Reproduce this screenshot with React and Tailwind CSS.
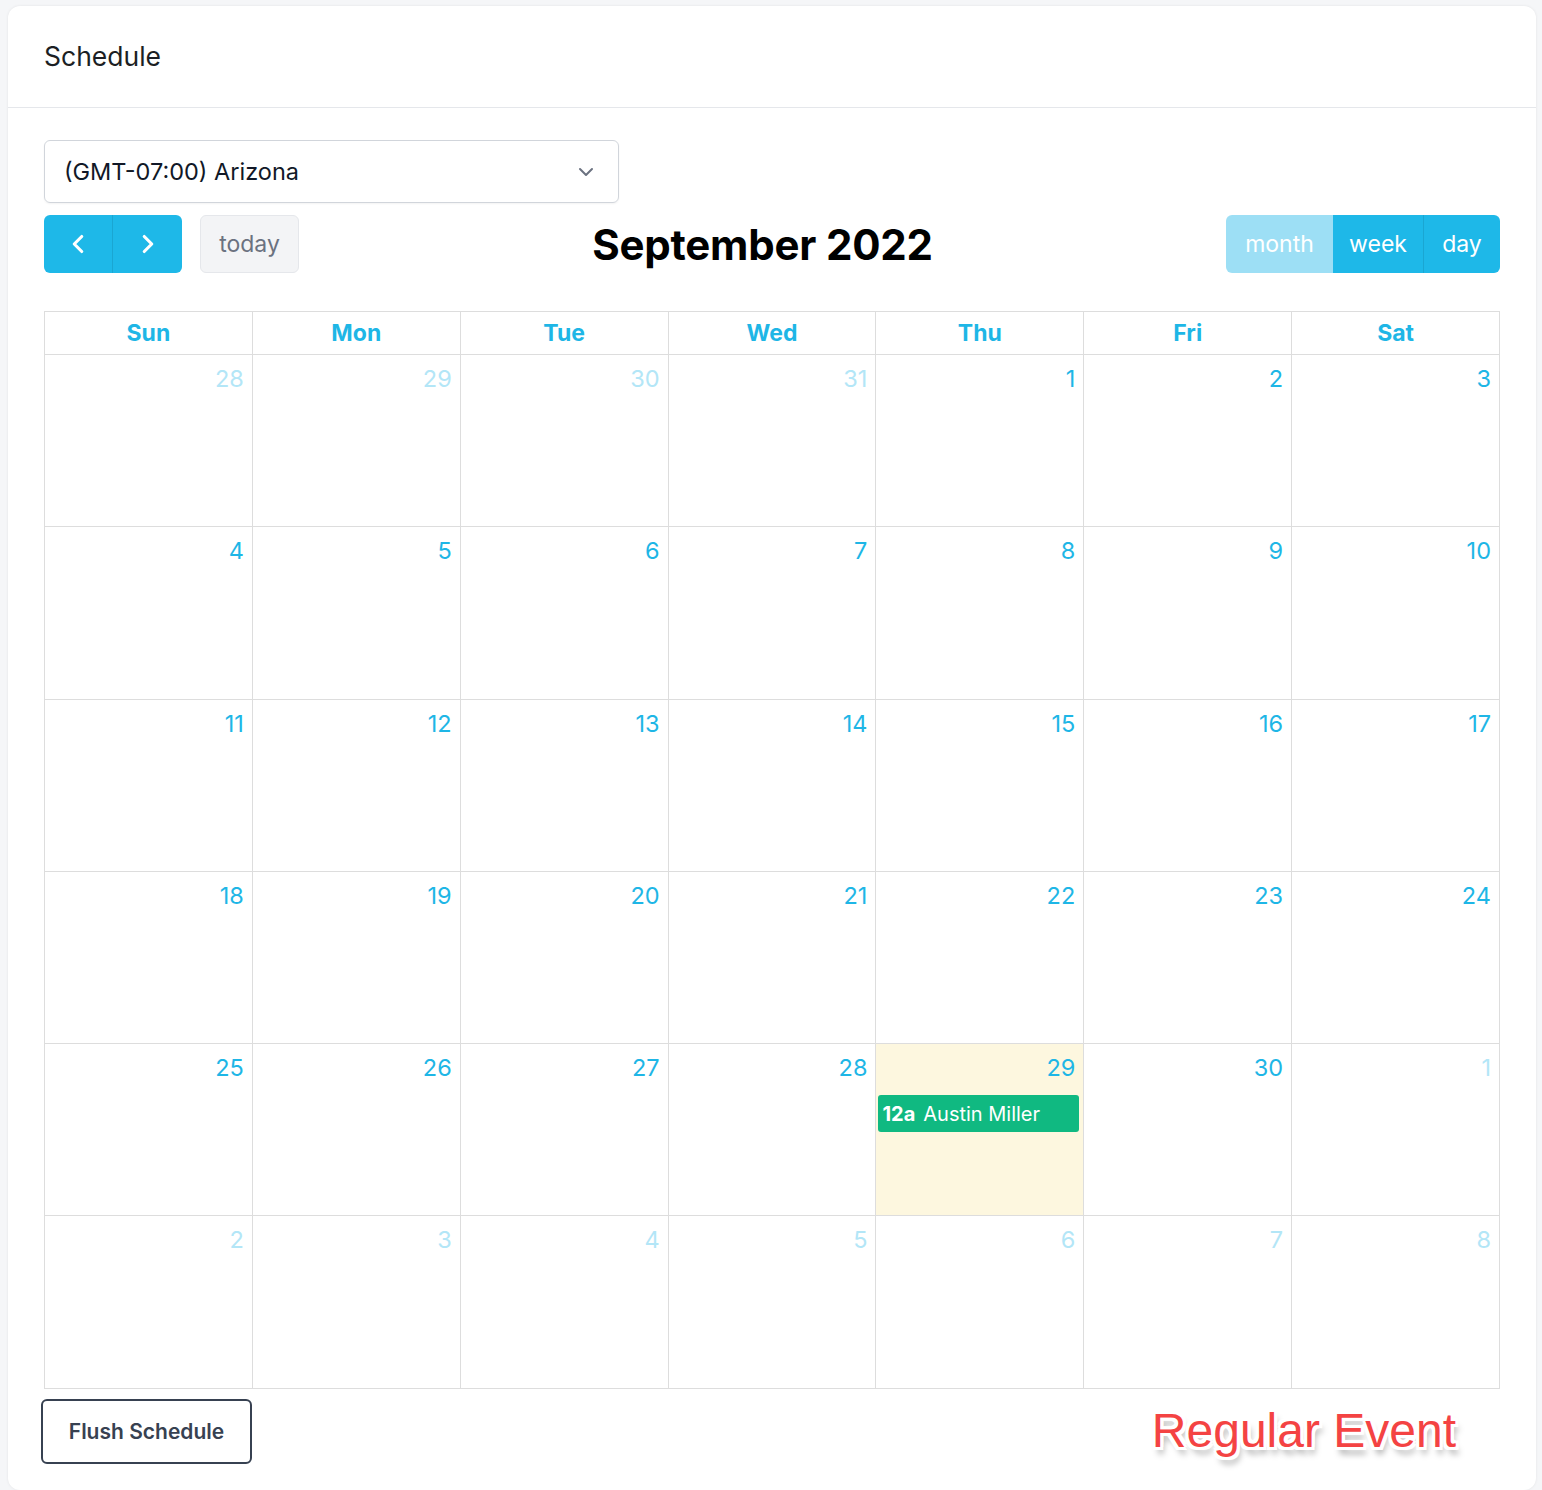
import React from "react";
import { ChevronDown, ChevronLeft, ChevronRight } from "lucide-react";

const days = ["Sun", "Mon", "Tue", "Wed", "Thu", "Fri", "Sat"];

// six weeks shown in month view, starting Sun Aug 28
const buildWeeks = () => {
  const weeks = [];
  const start = new Date(2022, 7, 28);
  for (let w = 0; w < 6; w++) {
    const row = [];
    for (let d = 0; d < 7; d++) {
      const date = new Date(start);
      date.setDate(start.getDate() + w * 7 + d);
      row.push({
        day: date.getDate(),
        inMonth: date.getMonth() === 8,
        today: date.getMonth() === 8 && date.getDate() === 29,
      });
    }
    weeks.push(row);
  }
  return weeks;
};

const App = () => {
  const weeks = buildWeeks();

  return (
    <div
      className="min-h-screen bg-[#f5f6f8] px-2 pt-[6px] pb-1"
      style={{ fontFamily: "Inter, 'Noto Sans', sans-serif" }}
    >
      <div className="bg-white rounded-xl shadow-[0_0_3px_rgba(0,0,0,0.08)] w-[1528px]">
        {/* Header */}
        <div className="h-[102px] flex items-center px-9 border-b border-[#e5e7eb]">
          <h1 className="text-[26.5px] text-[#1c1f24]">Schedule</h1>
        </div>

        {/* Body */}
        <div className="px-9 pt-8 pb-[23px]">
          {/* Timezone select */}
          <div className="w-[575px] h-[63px] border border-[#d1d5db] rounded-md flex items-center justify-between pl-[19px] pr-5 shadow-[0_1px_2px_rgba(0,0,0,0.05)]">
            <span className="text-[23.5px] text-[#111827]">(GMT-07:00) Arizona</span>
            <ChevronDown size={24} strokeWidth={2} className="text-[#6b7280]" />
          </div>

          {/* Toolbar */}
          <div className="mt-3 flex items-center justify-between h-[58px]">
            <div className="flex items-center gap-[18px]">
              <div className="flex h-[58px] rounded-md overflow-hidden">
                <button className="w-[69px] bg-[#1eb8e8] flex items-center justify-center text-white border-r border-[#1aa6d2]">
                  <ChevronLeft size={30} strokeWidth={2.5} />
                </button>
                <button className="w-[69px] bg-[#1eb8e8] flex items-center justify-center text-white">
                  <ChevronRight size={30} strokeWidth={2.5} />
                </button>
              </div>
              <button className="h-[58px] w-[99px] bg-[#f3f4f6] border border-[#e5e7eb] rounded-md text-[23px] text-[#6b7280]">
                today
              </button>
            </div>
            <h2 className="text-[42px] font-bold text-black tracking-[-0.2px]">September 2022</h2>
            <div className="flex h-[58px] rounded-md overflow-hidden">
              <button className="w-[107px] bg-[#9ddff5] text-white text-[23px]">month</button>
              <button className="w-[91px] bg-[#1eb8e8] text-white text-[23px] border-r border-[#1aa6d2]">week</button>
              <button className="w-[76px] bg-[#1eb8e8] text-white text-[23px]">day</button>
            </div>
          </div>

          {/* Calendar */}
          <div className="mt-[38px] border-l border-t border-[#dddddd] w-[1456px]">
            <div className="grid grid-cols-7">
              {days.map((d) => (
                <div
                  key={d}
                  className="h-[43px] border-r border-b border-[#dddddd] flex items-center justify-center text-[23px] font-bold text-[#1eb6e6]"
                >
                  {d}
                </div>
              ))}
            </div>
            {weeks.map((row, wi) => (
              <div key={wi} className="grid grid-cols-7">
                {row.map((c, ci) => (
                  <div
                    key={ci}
                    className={`h-[172.3px] border-r border-b border-[#dddddd] flex flex-col ${
                      c.today ? "bg-[#fdf7df]" : ""
                    }`}
                  >
                    <div
                      className={`text-right pr-2 pt-[9px] text-[23.5px] leading-[30px] ${
                        c.inMonth ? "text-[#1eb6e6]" : "text-[#b3e6f7]"
                      }`}
                    >
                      {c.day}
                    </div>
                    {c.today && (
                      <div className="ml-[2px] mr-[4px] mt-[12px] h-[37px] bg-[#10b981] rounded-[3px] flex items-center px-[4px] text-white text-[20px]">
                        <span className="font-bold mr-[8px]">12a</span>
                        <span>Austin Miller</span>
                      </div>
                    )}
                  </div>
                ))}
              </div>
            ))}
          </div>

          {/* Footer */}
          <div className="mt-[10px] flex items-start justify-between">
            <button className="-ml-[3px] w-[211px] h-[65px] border-2 border-[#374151] rounded-md text-[21px] font-semibold text-[#374151]">
              Flush Schedule
            </button>
            <div
              className="mr-[44px] -mt-[4px] text-[48px] text-[#f44343] [text-shadow:-3px_-3px_0_#fff,3px_-3px_0_#fff,-3px_3px_0_#fff,3px_3px_0_#fff,0_-3px_0_#fff,0_3px_0_#fff,-3px_0_0_#fff,3px_0_0_#fff,3px_7px_6px_rgba(0,0,0,0.35)]"
              style={{ fontFamily: "'Liberation Sans', Arial, sans-serif" }}
            >
              Regular Event
            </div>
          </div>
        </div>
      </div>
    </div>
  );
};

export default App;
